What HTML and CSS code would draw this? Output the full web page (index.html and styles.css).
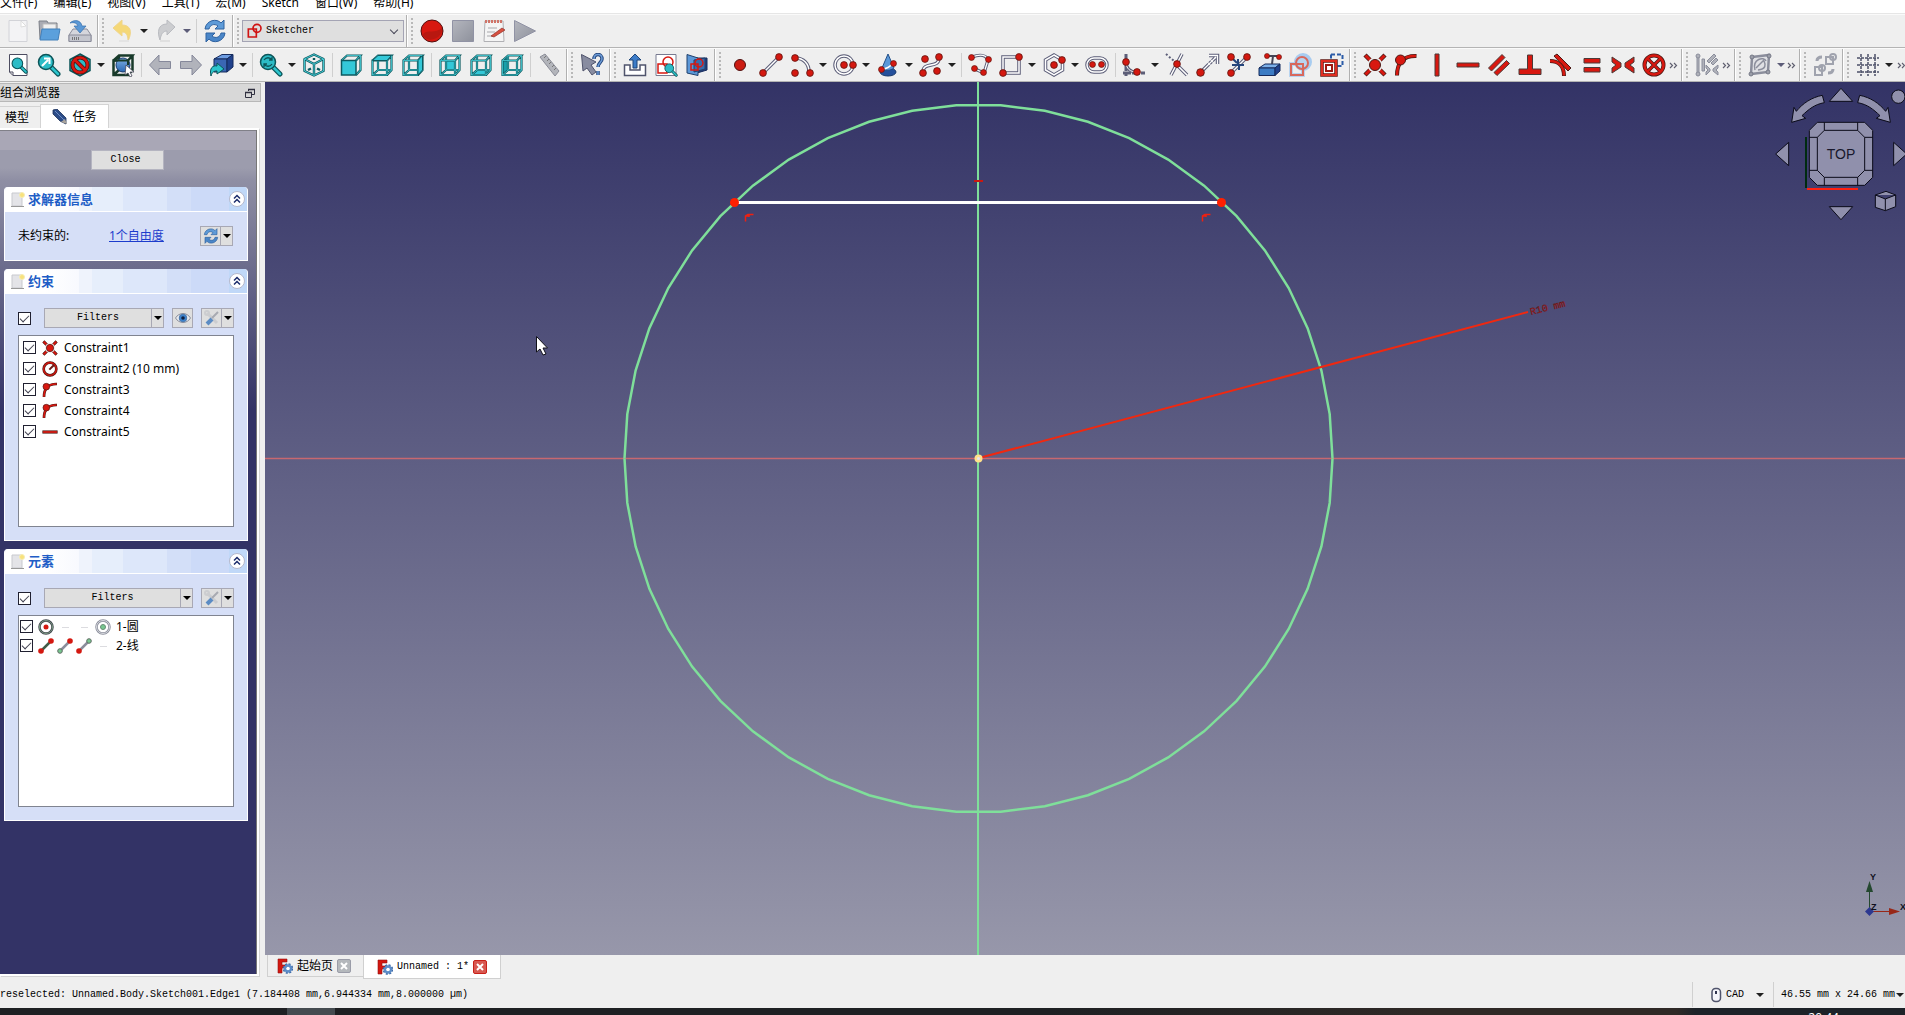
FILE: index.html
```html
<!DOCTYPE html>
<html lang="zh-CN">
<head>
<meta charset="utf-8">
<title>Sketcher</title>
<link rel="stylesheet" href="styles.css">
</head>
<body>
<svg class="sprite" aria-hidden="true">
  <defs>
    <linearGradient id="gBlue" x1="0" y1="0" x2="0" y2="1"><stop offset="0" stop-color="#7fb0e4"/><stop offset="1" stop-color="#2b68b4"/></linearGradient>
    <linearGradient id="gGray" x1="0" y1="0" x2="1" y2="1"><stop offset="0" stop-color="#b4b6be"/><stop offset="1" stop-color="#8e919c"/></linearGradient>
    <path id="wire" d="M2.500 7.500H17V22H2.500Z M2.500 7.500L8 2.500H21.500L17 7.500 M21.500 2.500V17L17 22 M8 2.500V17H21.500 M2.500 22L8 17"/>
  </defs>
  <symbol id="new" viewBox="0 0 24 24"><path d="M3 1.500H21V22.500H3Z" fill="#f3f3f5" stroke="#d2d3d8"/><path d="M15 2l5 5-5 1z" fill="#fff" stroke="#ddd"/></symbol>
  <symbol id="open" viewBox="0 0 24 24"><path d="M2 2h8l1 2h9v16H3z" fill="#a9abb3" stroke="#7d8088"/><path d="M6 5h13v8H6z" fill="#f0f0f0" stroke="#bbb"/><path d="M5 10H23L21 21H3z" fill="#5ba0dc" stroke="#4380ba"/></symbol>
  <symbol id="save" viewBox="0 0 24 24"><path d="M5 10H19L23 16V22.500H1V16z" fill="#d5d6dc" stroke="#8a8c9a"/><path d="M1 16H23V22.500H1z" fill="#c4c6ce" stroke="#8a8c9a"/><path d="M4 19.500h8" stroke="#777" stroke-dasharray="1 1" stroke-width="3"/><path d="M2 4C6 0 13 1 14 7h4l-6 7-6-7h4C9 4 6 3 2 4z" fill="#5a98d6" stroke="#3a70ac" stroke-width=".7"/></symbol>
  <symbol id="undo" viewBox="0 0 24 24"><path d="M2 9L11 1V6C19 6 22 12 17 22C17 16 15 13 11 13V17z" fill="#f5d877" stroke="#efd58c"/><path d="M8 22h10" stroke="#e4e4e4" stroke-width="2"/></symbol>
  <symbol id="redo" viewBox="0 0 24 24"><path d="M21 8L13 1V5C4 5 3 13 6 21C7 15 9 12 13 12V16z" fill="#cccdd0" stroke="#b9bbc0"/><path d="M6 22h10" stroke="#e0e0e0" stroke-width="2"/></symbol>
  <symbol id="refresh" viewBox="0 0 24 24"><path d="M2 10C3 1 14-1 18 4L21 1V10H12L15 7C11 4 7 6 6 10z" fill="#5e9bd8" stroke="#2f62a0"/><path d="M22 14C21 23 10 25 6 20L3 23V14H12L9 17C13 20 17 18 18 14z" fill="#4a86c8" stroke="#2f62a0"/></symbol>
  <symbol id="sketcher" viewBox="0 0 24 24"><g fill="none" stroke="#d01414" stroke-width="2.500"><path d="M2 9H14V21H2Z"/><circle cx="15" cy="8" r="6"/></g></symbol>
  <symbol id="record" viewBox="0 0 24 24"><circle cx="12" cy="12" r="11" fill="#d81810" stroke="#501010"/><path d="M3 15C8 10 15 15 22 9A11 11 0 0 1 3 17z" fill="#b81810"/></symbol>
  <symbol id="stop" viewBox="0 0 24 24"><path d="M1.500 1.500H22.500V22.500H1.500Z" fill="url(#gGray)" stroke="#9092a4"/></symbol>
  <symbol id="macro" viewBox="0 0 24 24"><path d="M3 2H21L22 22.500H2Z" fill="#f4f4f4" stroke="#b0b0b4"/><path d="M3 2.500H21" stroke="#d07468" stroke-width="3" stroke-dasharray="2 1"/><path d="M6 9h9M5 13h8M5 17h6" stroke="#a8a8ac"/><path d="M9 17l11-8 3 2-11 7z" fill="#d85040" stroke="#903028" stroke-width=".7"/></symbol>
  <symbol id="play" viewBox="0 0 24 24"><path d="M1.500 1.500L22.500 12L1.500 22.500Z" fill="url(#gGray)" stroke="#9092a4"/></symbol>
  <symbol id="lens" viewBox="0 0 24 24"><path d="M13 13L21 21" stroke="#0b5458" stroke-width="5" stroke-linecap="round"/><path d="M13 13L21 21" stroke="#2cc4cc" stroke-width="2.500" stroke-linecap="round"/><circle cx="9" cy="9" r="7.500" fill="#2cbcc6" stroke="#0b5458" stroke-width="1.500"/></symbol>
  <symbol id="fitall" viewBox="0 0 24 24"><path d="M3.500 1.500H21V22.500H7L3.500 19Z" fill="#fff" stroke="#4c4c60"/><path d="M3.500 19H7V22.500" fill="none" stroke="#4c4c60"/><use href="#lens" x="5" y="4" width="17" height="17"/></symbol>
  <symbol id="fitsel" viewBox="0 0 24 24"><use href="#lens" width="24" height="24"/><path d="M5 13L11 7M7 5.500H12.500V11" stroke="#fff" stroke-width="2" fill="none"/></symbol>
  <symbol id="drawstyle" viewBox="0 0 24 24"><path d="M12 1L22 6.500V17.500L12 23L2 17.500V6.500Z" fill="#2cbcc6" stroke="#0b5458" stroke-width="1.500"/><circle cx="12" cy="12" r="7.500" fill="none" stroke="#501010" stroke-width="4"/><path d="M7 7L17 17" stroke="#501010" stroke-width="4"/><circle cx="12" cy="12" r="7.500" fill="none" stroke="#d81810" stroke-width="2.500"/><path d="M7 7L17 17" stroke="#d81810" stroke-width="2.500"/></symbol>
  <symbol id="boxsel" viewBox="0 0 24 24"><use href="#wire" fill="none" stroke="#183a2a" stroke-width="2.500"/><circle cx="12" cy="12" r="7" fill="url(#gBlue)" stroke="#18386c"/><path d="M2.500 7.500H17V12" fill="none" stroke="#183a2a" stroke-width="2"/><path d="M15 12l8 7-4 0 2 4-2 1-2-4-3 2z" fill="#fff" stroke="#445" stroke-width=".8"/></symbol>
  <symbol id="back" viewBox="0 0 24 24"><path d="M1.500 12L11 2V8.500H22.500V15.500H11V22Z" fill="#b1b3bb" stroke="#85889a"/></symbol>
  <symbol id="fwd" viewBox="0 0 24 24"><path d="M22.500 12L13 2V8.500H1.500V15.500H13V22Z" fill="#b1b3bb" stroke="#85889a"/></symbol>
  <symbol id="linkgo" viewBox="0 0 24 24"><path d="M4 6L12 1.500H23L17 6Z" fill="#6c9be0" stroke="#152a5c"/><path d="M4 6H17V19H4Z" fill="#3a66b4" stroke="#152a5c"/><path d="M17 6L23 1.500V14L17 19Z" fill="#20418c" stroke="#152a5c"/><path d="M1 23C-1 15 3 12 7 13V10L14 16L7 21V18C4 18 2 19 1 23Z" fill="#2cc4cc" stroke="#0b5458"/></symbol>
  <symbol id="zoom" viewBox="0 0 24 24"><use href="#lens" width="24" height="24"/><path d="M5 7C7 4 11 4 13 7M13 4V7H10M13 11C11 14 7 14 5 11M5 14V11H8" fill="none" stroke="#0b5458" stroke-width="1.300"/></symbol>
  <symbol id="iso" viewBox="0 0 24 24"><g fill="none" stroke-linejoin="round"><path d="M12 1.500L21.500 6V18L12 22.500L2.500 18V6ZM2.500 6L12 11L21.500 6M12 11V22M6 17L9 15.500M18 17L15 15.500M12 5V7" stroke="#0c5a60" stroke-width="2.400"/><path d="M12 1.500L21.500 6V18L12 22.500L2.500 18V6ZM2.500 6L12 11L21.500 6M12 11V22" stroke="#48d0da" stroke-width=".9"/></g></symbol>
  <symbol id="vbase" viewBox="0 0 24 24"><use href="#wire" fill="none" stroke="#0c5a60" stroke-width="2.200"/><use href="#wire" fill="none" stroke="#48d0da" stroke-width=".8"/></symbol>
  <symbol id="vfront" viewBox="0 0 24 24"><path d="M2.500 7.500L8 2.500H21.500L17 7.500M21.500 2.500V17L17 22" fill="none" stroke="#0c5a60" stroke-width="2.200"/><path d="M2.500 7.500L8 2.500H21.500L17 7.500M21.500 2.500V17L17 22" fill="none" stroke="#48d0da" stroke-width=".8"/><path d="M2.500 7.500H17V22H2.500Z" fill="#34c8d8" stroke="#0c5a60" stroke-width="1.500"/></symbol>
  <symbol id="vtop" viewBox="0 0 24 24"><use href="#vbase"/><path d="M2.500 7.500L8 2.500H21.500L17 7.500Z" fill="#34c8d8" stroke="#0c5a60"/></symbol>
  <symbol id="vright" viewBox="0 0 24 24"><use href="#vbase"/><path d="M17 7.500L21.500 2.500V17L17 22Z" fill="#34c8d8" stroke="#0c5a60"/></symbol>
  <symbol id="vrear" viewBox="0 0 24 24"><path d="M8 7.500H17V17H8Z" fill="#34c8d8"/><use href="#vbase"/></symbol>
  <symbol id="vbottom" viewBox="0 0 24 24"><path d="M2.500 22L8 17H21.500L17 22Z" fill="#34c8d8"/><use href="#vbase"/></symbol>
  <symbol id="vleft" viewBox="0 0 24 24"><path d="M2.500 7.500L8 2.500V17L2.500 22Z" fill="#18a0aa"/><use href="#vbase"/></symbol>
  <symbol id="measure" viewBox="0 0 24 24"><path d="M3 4L8 1L22 18L18 23Z" fill="#b3b5bb" stroke="#8b8d98"/><path d="M9 3l-2 2M12 6l-2 2M14 9l-2 2M17 12l-2 2M19 15l-2 2" stroke="#777" /></symbol>
  <symbol id="whats" viewBox="0 0 24 24"><path d="M1.500 1.500L16 9L11 12L16 19L12 22L7 15L3 18Z" fill="#888ca0" stroke="#50546c"/><path d="M14 6C14 0 22 0 22 6C22 9 18 10 18 14M18 18V22" fill="none" stroke="#26467c" stroke-width="3.500"/><path d="M14 6C14 0 22 0 22 6C22 9 18 10 18 14M18 18V22" fill="none" stroke="#6b9bd6" stroke-width="1.500"/></symbol>
  <symbol id="leave" viewBox="0 0 24 24"><path d="M1.500 12H7V17H17V12H22.500V22.500H1.500Z" fill="#fff" stroke="#50546c" stroke-width="1.500"/><path d="M12 1L18 7H14V15H10V7H6Z" fill="#3c7cc8" stroke="#1d4478"/></symbol>
  <symbol id="viewsk" viewBox="0 0 24 24"><path d="M2 1.500H22V22.500H2Z" fill="#fff" stroke="#777a90"/><path d="M4 11H13V20H4Z" fill="none" stroke="#d81810" stroke-width="1.500"/><circle cx="14" cy="9" r="5" fill="none" stroke="#d81810" stroke-width="1.500"/><use href="#lens" x="10" y="10" width="14" height="14"/></symbol>
  <symbol id="section" viewBox="0 0 24 24"><path d="M10 5H22V17L12 20Z" fill="#24407c" stroke="#152a5c"/><path d="M2 1.500L13 5V22.500L2 20Z" fill="#5c98d8" stroke="#20406c"/><path d="M9 7L20 5V16L9 19Z" fill="#3a6cac" stroke="#20406c"/><path d="M6 11H13V17H6Z" fill="none" stroke="#d81810" stroke-width="1.500"/><circle cx="14" cy="10" r="4" fill="none" stroke="#d81810" stroke-width="1.500"/></symbol>

  <symbol id="dot" viewBox="0 0 8 8"><circle cx="4" cy="4" r="3.400" fill="#d41810" stroke="#601812" stroke-width=".8"/></symbol>
  <symbol id="point" viewBox="0 0 24 24"><circle cx="12" cy="12" r="5.500" fill="#cc1c12" stroke="#501010"/></symbol>
  <symbol id="line" viewBox="0 0 24 24"><path d="M4 20L20 4" stroke="#5c5e78" stroke-width="3.500"/><path d="M4 20L20 4" stroke="#fff" stroke-width="1.500"/><use href="#dot" x="0" y="16" width="8" height="8"/><use href="#dot" x="16" y="0" width="8" height="8"/></symbol>
  <symbol id="arc" viewBox="0 0 24 24"><g fill="none"><path d="M5 5C14 5 19 11 19 19" stroke="#5c5e78" stroke-width="3.500"/><path d="M5 5C14 5 19 11 19 19" stroke="#fff" stroke-width="1.500"/></g><use href="#dot" x="1" y="1" width="8" height="8"/><use href="#dot" x="1" y="16" width="8" height="8"/><use href="#dot" x="16" y="16" width="8" height="8"/></symbol>
  <symbol id="circle" viewBox="0 0 24 24"><circle cx="11" cy="12" r="9" fill="none" stroke="#5c5e78" stroke-width="3.500"/><circle cx="11" cy="12" r="9" fill="none" stroke="#fff" stroke-width="1.500"/><use href="#dot" x="7" y="8" width="8" height="8"/><use href="#dot" x="16" y="8" width="8" height="8"/></symbol>
  <symbol id="conic" viewBox="0 0 24 24"><ellipse cx="12" cy="19" rx="8" ry="4" fill="#24509c" stroke="#18386c"/><path d="M12 1L18 15C14 18 10 18 6 15Z" fill="#5a98d8" stroke="#245088"/><path d="M6 16C10 16 14 14 17 10" stroke="#fff" stroke-width="1.500" fill="none"/><use href="#dot" x="2" y="13" width="7" height="7"/><use href="#dot" x="14" y="7" width="7" height="7"/></symbol>
  <symbol id="spline" viewBox="0 0 24 24"><g fill="none"><path d="M4 19C4 8 20 16 20 5" stroke="#5c5e78" stroke-width="3.500"/><path d="M4 19C4 8 20 16 20 5" stroke="#fff" stroke-width="1.500"/></g><use href="#dot" x="2" y="2" width="8" height="8"/><use href="#dot" x="16" y="0" width="8" height="8"/><use href="#dot" x="0" y="16" width="8" height="8"/><use href="#dot" x="14" y="14" width="8" height="8"/></symbol>
  <symbol id="poly" viewBox="0 0 24 24"><g fill="none"><path d="M4 4C12 1 18 2 20 7L16 20L7 16" stroke="#5c5e78" stroke-width="3.200"/><path d="M4 4C12 1 18 2 20 7L16 20L7 16" stroke="#fff" stroke-width="1.300"/></g><use href="#dot" x="0" y="1" width="7" height="7"/><use href="#dot" x="17" y="3" width="7" height="7"/><use href="#dot" x="12" y="16" width="7" height="7"/><use href="#dot" x="3" y="12" width="7" height="7"/></symbol>
  <symbol id="rect" viewBox="0 0 24 24"><path d="M4 4H20V20H4Z" fill="none" stroke="#5c5e78" stroke-width="3.500"/><path d="M4 4H20V20H4Z" fill="none" stroke="#fff" stroke-width="1.500"/><use href="#dot" x="16" y="0" width="8" height="8"/><use href="#dot" x="0" y="16" width="8" height="8"/></symbol>
  <symbol id="hex" viewBox="0 0 24 24"><path d="M12 2L20.500 7V17L12 22L3.500 17V7Z" fill="none" stroke="#5c5e78" stroke-width="3.500"/><path d="M12 2L20.500 7V17L12 22L3.500 17V7Z" fill="none" stroke="#fff" stroke-width="1.500"/><use href="#dot" x="8" y="8" width="8" height="8"/><use href="#dot" x="16" y="3" width="8" height="8"/></symbol>
  <symbol id="slot" viewBox="0 0 24 24"><rect x="2" y="5" width="20" height="14" rx="7" fill="none" stroke="#5c5e78" stroke-width="3.500"/><rect x="2" y="5" width="20" height="14" rx="7" fill="none" stroke="#fff" stroke-width="1.500"/><use href="#dot" x="4" y="8" width="7" height="7"/><use href="#dot" x="13" y="8" width="7" height="7"/></symbol>
  <symbol id="fillet" viewBox="0 0 24 24"><path d="M4 1V23M1 20H23" stroke="#5c5e78" stroke-width="3" stroke-dasharray="8 1"/><path d="M4 8C4 16 8 19 15 19" fill="none" stroke="#5c5e78" stroke-width="3"/><path d="M4 8C4 16 8 19 15 19" fill="none" stroke="#fff"/><use href="#dot" x="0" y="5" width="8" height="8"/><use href="#dot" x="11" y="15" width="8" height="8"/></symbol>
  <symbol id="trim" viewBox="0 0 24 24"><path d="M17 1L6 22M10 10L22 22" stroke="#5c5e78" stroke-width="3.500"/><path d="M17 1L6 22M10 10L22 22" stroke="#fff" stroke-width="1.500"/><path d="M1 1L9 8" stroke="#5c5e78" stroke-width="2" stroke-dasharray="2 2"/><use href="#dot" x="8" y="7" width="8" height="8"/></symbol>
  <symbol id="extend" viewBox="0 0 24 24"><path d="M5 19L19 5" stroke="#5c5e78" stroke-width="3.500" stroke-dasharray="11 1 3 1"/><path d="M13 2.500H21.500V11" fill="none" stroke="#5c5e78" stroke-width="3.500"/><path d="M5 19L20 4M13 2.500H21.500V11" fill="none" stroke="#fff" stroke-width="1.300"/><use href="#dot" x="0" y="15" width="9" height="9"/></symbol>
  <symbol id="split" viewBox="0 0 24 24"><path d="M4 20L20 4" stroke="#5c5e78" stroke-width="3.500"/><path d="M4 20L20 4" stroke="#fff" stroke-width="1.500"/><path d="M5 5L10 10M11 6V12H5M17 12H12V17" stroke="#26467c" stroke-width="2" fill="none"/><use href="#dot" x="0" y="0" width="8" height="8"/><use href="#dot" x="16" y="0" width="8" height="8"/><use href="#dot" x="0" y="16" width="8" height="8"/></symbol>
  <symbol id="external" viewBox="0 0 24 24"><path d="M1 15L7 11H22L17 15Z" fill="#7cb0e8" stroke="#152a5c"/><path d="M1 15H17V22.500H1Z" fill="#3c7cc4" stroke="#152a5c"/><path d="M17 15L22 11V18L17 22.500Z" fill="#20418c" stroke="#152a5c"/><path d="M8 3H20M15 3L14 11" stroke="#445" stroke-width="2"/><use href="#dot" x="6" y="0" width="6" height="6"/><use href="#dot" x="18" y="1" width="6" height="6"/></symbol>
  <symbol id="carbon" viewBox="0 0 24 24"><g fill="none"><path d="M2 11H14V22H2Z" stroke="#b8d4f0" stroke-width="4"/><circle cx="14" cy="9" r="7" fill="#b8d4f0" stroke="#a8ccf0" stroke-width="4"/><path d="M2 11H14V22H2Z" stroke="#d8685c" stroke-width="2"/><circle cx="13" cy="10" r="6" stroke="#d8685c" stroke-width="2"/></g></symbol>
  <symbol id="constr" viewBox="0 0 24 24"><path d="M11 1.500H22.500V13H17M11 1.500V7" fill="none" stroke="#2c5ca8" stroke-width="2" stroke-dasharray="4 2"/><path d="M2 8H16V22H2Z" fill="#fff" stroke="#601812" stroke-width="3.500"/><path d="M2 8H16V22H2Z" fill="none" stroke="#e02c20" stroke-width="2"/><path d="M6 12H12V18H6Z" fill="none" stroke="#a01810" stroke-width="2"/></symbol>

  <symbol id="coinc" viewBox="0 0 24 24"><path d="M2 2L22 22M22 2L2 22" stroke="#4a1a16" stroke-width="4.500"/><path d="M2.500 2.500L21.500 21.500M21.500 2.500L2.500 21.500" stroke="#d81810" stroke-width="3"/><circle cx="12" cy="12" r="7.500" fill="#eee"/><circle cx="12" cy="12" r="5.500" fill="#d81810" stroke="#4a1a16"/></symbol>
  <symbol id="ponobj" viewBox="0 0 24 24"><path d="M3 22.500C3 10 9 2.500 22.500 3" fill="none" stroke="#4a1a16" stroke-width="4"/><path d="M3 22C3 10 9 2.500 22 3" fill="none" stroke="#d81810" stroke-width="2.500"/><circle cx="6.500" cy="7" r="5" fill="#d81810" stroke="#4a1a16"/></symbol>
  <symbol id="vert" viewBox="0 0 24 24"><path d="M10 1H14V23H10Z" fill="#d81810" stroke="#4a3a38"/></symbol>
  <symbol id="horiz" viewBox="0 0 24 24"><path d="M1 10H23V14H1Z" fill="#d81810" stroke="#4a3a38"/></symbol>
  <symbol id="para" viewBox="0 0 24 24"><path d="M1.500 15L15 1.500L18 4.500L4.500 18ZM7 19.500L19.500 7.500L22.500 10.500L10 22.500Z" fill="#d81810" stroke="#4a3a38"/></symbol>
  <symbol id="perp" viewBox="0 0 24 24"><path d="M9.500 2H14.500V16H23V21.500H1V16H9.500Z" fill="#d81810" stroke="#4a3a38"/></symbol>
  <symbol id="tang" viewBox="0 0 24 24"><path d="M5 3L8 1L22 15L19 18Z" fill="#d81810" stroke="#4a1a16"/><path d="M1 8C9 8 15 13 15 23" fill="none" stroke="#4a1a16" stroke-width="4"/><path d="M1 8C9 8 15 13 15 22.500" fill="none" stroke="#d81810" stroke-width="2.500"/></symbol>
  <symbol id="equal" viewBox="0 0 24 24"><path d="M4 5.500H20V10H4ZM4 14.500H20V19H4Z" fill="#d81810" stroke="#4a3a38"/></symbol>
  <symbol id="sym" viewBox="0 0 24 24"><path d="M1 4L10 10V14L1 20V15L5 12L1 9ZM23 4L14 10V14L23 20V15L19 12L23 9Z" fill="#d81810" stroke="#4a3a38"/></symbol>
  <symbol id="block" viewBox="0 0 24 24"><g fill="none"><circle cx="12" cy="12" r="9.500" stroke="#4a1a16" stroke-width="4"/><path d="M6 6L18 18M18 6L6 18" stroke="#4a1a16" stroke-width="3.500"/><circle cx="12" cy="12" r="9.500" stroke="#d81810" stroke-width="2.500"/><path d="M5 5L19 19M19 5L5 19" stroke="#d81810" stroke-width="2"/></g></symbol>
  <symbol id="radius" viewBox="0 0 24 24"><circle cx="12" cy="12" r="9.500" fill="none" stroke="#4a1a16" stroke-width="4"/><circle cx="12" cy="12" r="9.500" fill="none" stroke="#c81810" stroke-width="2.500"/><path d="M11 13L18 6" stroke="#6a1a16" stroke-width="3"/></symbol>
  <symbol id="selcon" viewBox="0 0 24 24"><g fill="#b0b2ba" stroke="#8b8e9c"><path d="M2 3H4V22H2Z"/><circle cx="3" cy="3" r="2"/><circle cx="3" cy="21" r="2"/><path d="M7 6H9.500V18H7ZM12 8L19 1L21 3L14 10ZM16 10L21 5L23 7L18 12ZM11 12L15 16V18L11 22V19L13 17L11 15ZM23 12L18 16V18L23 22V19L21 17L23 15Z"/></g></symbol>
  <symbol id="bspl" viewBox="0 0 24 24"><path d="M4 4L21 2L20 19L3 21Z" fill="#dfe0e4" stroke="#8b8e9c" stroke-width="2.500"/><path d="M7 17C4 6 16 3 18 8M10 17C18 16 18 12 16 8M8 15L16 7" fill="none" stroke="#8b8e9c" stroke-width="1.500"/><g fill="#9a9da8" stroke="#777a88"><circle cx="4" cy="4" r="2"/><circle cx="21" cy="3" r="2"/><circle cx="20" cy="19" r="2"/><circle cx="3" cy="21" r="2"/></g></symbol>
  <symbol id="vspace" viewBox="0 0 24 24"><g fill="none" stroke="#a0a3ae" stroke-width="2"><path d="M13 4H20V11H13Z"/><circle cx="20" cy="4" r="3"/><path d="M2 14H9V22H2Z"/><circle cx="9" cy="15" r="3"/><path d="M4 8C4 5 6 4 9 4M20 16C20 19 18 20 15 20" stroke-width="3"/></g></symbol>
  <symbol id="grid" viewBox="0 0 24 24"><path d="M5 1V23M12 1V23M19 1V23M1 5H23M1 12H23M1 19H23" stroke="#4c5068" stroke-width="1.500" stroke-dasharray="3 1"/></symbol>

  <symbol id="doc" viewBox="0 0 14 15"><path d="M1 1H11V14H1Z" fill="#e4e4e8" stroke="#c8c9ce"/><path d="M0 14.500H13" stroke="#999"/><circle cx="11" cy="3" r="2.500" fill="#f8e27c" stroke="#f6ecb4"/></symbol>
  <symbol id="pencil" viewBox="0 0 16 16"><path d="M1 1L5 0L14 9V15L8 12L1 5Z" fill="#2c4c88" stroke="#1c3058" stroke-width=".8"/><path d="M3 2L12 11" stroke="#6c8cc4"/><path d="M9 13L13 10L15 15Z" fill="#aaa49c"/></symbol>
  <symbol id="tools" viewBox="0 0 16 16"><path d="M3 3L13 13" stroke="#cccdd0" stroke-width="3"/><circle cx="3" cy="3" r="2" fill="none" stroke="#cccdd0" stroke-width="2"/><path d="M14 2L8 8" stroke="#a8aab2" stroke-width="2"/><path d="M8 9L3 14" stroke="#5c8cc4" stroke-width="4"/></symbol>
  <symbol id="eye" viewBox="0 0 16 16"><path d="M.5 8C4 2 12 2 15.500 8C12 14 4 14 .5 8Z" fill="#e8eaee" stroke="#8b8e9c"/><circle cx="8" cy="8" r="3.800" fill="#3c84d0" stroke="#4a78ac"/><circle cx="8" cy="8" r="1.800" fill="#102040"/></symbol>
  <symbol id="restore" viewBox="0 0 10 10"><path d="M3.500 3V1.500H9.500V6.500H7M.5 4.500V9.500H6.500V4.500Z" fill="none" stroke="#303040"/><path d="M3 1.500H10M0 4.500H7" stroke="#303040" stroke-width="1.500"/></symbol>
  <symbol id="chev" viewBox="0 0 18 18"><circle cx="9" cy="9" r="7.500" fill="#fff" stroke="#b4b8cc"/><path d="M6 8.500L9 5.500L12 8.500M6 12.500L9 9.500L12 12.500" fill="none" stroke="#1c2c6c" stroke-width="1.500"/></symbol>
  <symbol id="fcad" viewBox="0 0 16 16"><path d="M1 1H10V4H5V7H9V10H5V15H1Z" fill="#d41810" stroke="#901010" stroke-width=".6"/><circle cx="11" cy="10.500" r="4.300" fill="none" stroke="#3c68a4" stroke-width="2" stroke-dasharray="2 1.380"/><circle cx="11" cy="10.500" r="3" fill="none" stroke="#5c8cc8" stroke-width="2.500"/><circle cx="11" cy="10.500" r="1.500" fill="#fff"/></symbol>
  <symbol id="x" viewBox="0 0 14 14"><path d="M3 3L9 9M9 3L3 9" stroke="#fff" stroke-width="2"/></symbol>
  <symbol id="mouse" viewBox="0 0 12 16"><rect x="2" y="1.500" width="8.500" height="13" rx="3.500" fill="#f4f4fa" stroke="#50546c" stroke-width="1.500"/><path d="M6 4V7" stroke="#303450" stroke-width="2"/></symbol>
  <symbol id="more" viewBox="0 0 10 8"><path d="M1 2L3.500 4.500L1 7M5 2L7.500 4.500L5 7" fill="none" stroke="#606070" stroke-width="1.200"/></symbol>
  <symbol id="ecirc" viewBox="0 0 16 16"><circle cx="8" cy="8" r="6.500" fill="#fff" stroke="#444850" stroke-width="2.500"/><circle cx="8" cy="8" r="6.500" fill="none" stroke="#7c9c84"/><circle cx="8" cy="8" r="2.500" fill="#d41810"/></symbol>
  <symbol id="ecen" viewBox="0 0 16 16"><circle cx="8" cy="8" r="6.500" fill="#fff" stroke="#8b8e9c" stroke-width="2.500"/><circle cx="8" cy="8" r="6.500" fill="none" stroke="#d8dade"/><circle cx="8" cy="8" r="2.500" fill="#78c890" stroke="#688c74"/></symbol>
  <symbol id="edash" viewBox="0 0 16 16"><path d="M5 8.500H12" stroke="#dcdce0"/></symbol>
  <symbol id="el1" viewBox="0 0 16 16"><path d="M3 13L13 3" stroke="#405c48" stroke-width="2.500"/><circle cx="3" cy="13" r="2.800" fill="#d41810"/><circle cx="13" cy="3" r="2.800" fill="#d41810"/></symbol>
  <symbol id="el2" viewBox="0 0 16 16"><path d="M3 13L13 3" stroke="#8b8e9c" stroke-width="2.500"/><circle cx="3" cy="13" r="2.300" fill="#78c890" stroke="#606c64"/><circle cx="13" cy="3" r="2.800" fill="#d41810"/></symbol>
  <symbol id="el3" viewBox="0 0 16 16"><path d="M3 13L13 3" stroke="#8b8e9c" stroke-width="2.500"/><circle cx="3" cy="13" r="2.800" fill="#d41810"/><circle cx="13" cy="3" r="2.300" fill="#78c890" stroke="#606c64"/></symbol>
</svg>

<nav class="menubar">
  <a href="#">文件(F)</a><a href="#">编辑(E)</a><a href="#">视图(V)</a><a href="#">工具(T)</a><a href="#">宏(M)</a><a href="#">Sketch</a><a href="#">窗口(W)</a><a href="#">帮助(H)</a>
</nav>

<div class="toolbar">
  <div class="group first">
    <button class="tool"><svg><use href="#new"/></svg></button><button class="tool"><svg><use href="#open"/></svg></button><button class="tool"><svg><use href="#save"/></svg></button>
  </div>
  <div class="group">
    <button class="tool"><svg><use href="#undo"/></svg></button><button class="drop"></button><button class="tool"><svg><use href="#redo"/></svg></button><button class="drop dim"></button><i class="sep"></i><button class="tool"><svg><use href="#refresh"/></svg></button>
  </div>
  <div class="group">
    <div class="workbench"><svg><use href="#sketcher"/></svg><select aria-label="Workbench"><option>Sketcher</option></select></div>
  </div>
  <div class="group last">
    <button class="tool"><svg><use href="#record"/></svg></button><button class="tool"><svg><use href="#stop"/></svg></button><button class="tool"><svg><use href="#macro"/></svg></button><button class="tool"><svg><use href="#play"/></svg></button>
  </div>
</div>

<div class="toolbar">
  <div class="group first">
    <button class="tool"><svg><use href="#fitall"/></svg></button><button class="tool"><svg><use href="#fitsel"/></svg></button><button class="tool"><svg><use href="#drawstyle"/></svg></button><button class="drop"></button><button class="tool"><svg><use href="#boxsel"/></svg></button><i class="sep"></i><button class="tool"><svg><use href="#back"/></svg></button><button class="tool"><svg><use href="#fwd"/></svg></button><button class="tool"><svg><use href="#linkgo"/></svg></button><button class="drop"></button><i class="sep"></i><button class="tool"><svg><use href="#zoom"/></svg></button><button class="drop"></button><button class="tool"><svg><use href="#iso"/></svg></button><i class="sep"></i><button class="tool"><svg><use href="#vfront"/></svg></button><button class="tool"><svg><use href="#vtop"/></svg></button><button class="tool"><svg><use href="#vright"/></svg></button><i class="sep"></i><button class="tool"><svg><use href="#vrear"/></svg></button><button class="tool"><svg><use href="#vbottom"/></svg></button><button class="tool"><svg><use href="#vleft"/></svg></button><i class="sep"></i><button class="tool"><svg><use href="#measure"/></svg></button>
  </div>
  <div class="group"><button class="tool"><svg><use href="#whats"/></svg></button></div>
  <div class="group">
    <button class="tool"><svg><use href="#leave"/></svg></button><button class="tool"><svg><use href="#viewsk"/></svg></button><button class="tool"><svg><use href="#section"/></svg></button>
  </div>
  <div class="group">
    <button class="tool"><svg><use href="#point"/></svg></button><button class="tool"><svg><use href="#line"/></svg></button><button class="tool"><svg><use href="#arc"/></svg></button><button class="drop"></button><button class="tool"><svg><use href="#circle"/></svg></button><button class="drop"></button><button class="tool"><svg><use href="#conic"/></svg></button><button class="drop"></button><button class="tool"><svg><use href="#spline"/></svg></button><button class="drop"></button><i class="sep"></i><button class="tool"><svg><use href="#poly"/></svg></button><button class="tool"><svg><use href="#rect"/></svg></button><button class="drop"></button><button class="tool"><svg><use href="#hex"/></svg></button><button class="drop"></button><button class="tool"><svg><use href="#slot"/></svg></button><i class="sep"></i><button class="tool"><svg><use href="#fillet"/></svg></button><button class="drop"></button><button class="tool"><svg><use href="#trim"/></svg></button><button class="tool"><svg><use href="#extend"/></svg></button><button class="tool"><svg><use href="#split"/></svg></button><button class="tool"><svg><use href="#external"/></svg></button><button class="tool"><svg><use href="#carbon"/></svg></button><button class="tool"><svg><use href="#constr"/></svg></button>
  </div>
  <div class="group">
    <button class="tool"><svg><use href="#coinc"/></svg></button><button class="tool"><svg><use href="#ponobj"/></svg></button><button class="tool"><svg><use href="#vert"/></svg></button><button class="tool"><svg><use href="#horiz"/></svg></button><button class="tool"><svg><use href="#para"/></svg></button><button class="tool"><svg><use href="#perp"/></svg></button><button class="tool"><svg><use href="#tang"/></svg></button><button class="tool"><svg><use href="#equal"/></svg></button><button class="tool"><svg><use href="#sym"/></svg></button><button class="tool"><svg><use href="#block"/></svg></button><button class="more"><svg><use href="#more"/></svg></button>
  </div>
  <div class="group"><button class="tool"><svg><use href="#selcon"/></svg></button><button class="more"><svg><use href="#more"/></svg></button></div>
  <div class="group"><button class="tool"><svg><use href="#bspl"/></svg></button><button class="drop dim"></button><button class="more"><svg><use href="#more"/></svg></button></div>
  <div class="group"><button class="tool"><svg><use href="#vspace"/></svg></button></div>
  <div class="group last"><button class="tool"><svg><use href="#grid"/></svg></button><button class="drop"></button><button class="more end"><svg><use href="#more"/></svg></button></div>
</div>

<main class="work">
  <aside class="dock">
    <div class="dock-title"><span>组合浏览器</span><button class="bare"><svg class="i10"><use href="#restore"/></svg></button></div>
    <div class="dock-tabs"><button class="dtab">模型</button><button class="dtab on"><svg class="i16"><use href="#pencil"/></svg>任务</button></div>
    <div class="tasks">
      <button class="close">Close</button>
      <section class="box">
        <header><svg class="doc"><use href="#doc"/></svg><h2>求解器信息</h2><button class="bare"><svg class="i18"><use href="#chev"/></svg></button></header>
        <div class="content solver">
          <span>未约束的:</span><a href="#">1个自由度</a>
          <div class="split"><button><svg class="i16"><use href="#refresh"/></svg></button><button class="arrow"></button></div>
        </div>
      </section>
      <section class="box">
        <header><svg class="doc"><use href="#doc"/></svg><h2>约束</h2><button class="bare"><svg class="i18"><use href="#chev"/></svg></button></header>
        <div class="content">
          <div class="filters"><input type="checkbox" checked aria-label="Filters"><div class="split wide"><button>Filters</button><button class="arrow"></button></div><div class="split"><button class="solo"><svg class="i16"><use href="#eye"/></svg></button></div><div class="split"><button><svg class="i16"><use href="#tools"/></svg></button><button class="arrow"></button></div></div>
          <div class="list constraints">
            <label><input type="checkbox" checked><svg class="i16"><use href="#coinc"/></svg>Constraint1</label>
            <label><input type="checkbox" checked><svg class="i16"><use href="#radius"/></svg>Constraint2 (10 mm)</label>
            <label><input type="checkbox" checked><svg class="i16"><use href="#ponobj"/></svg>Constraint3</label>
            <label><input type="checkbox" checked><svg class="i16"><use href="#ponobj"/></svg>Constraint4</label>
            <label><input type="checkbox" checked><svg class="i16"><use href="#horiz"/></svg>Constraint5</label>
          </div>
        </div>
      </section>
      <section class="box">
        <header><svg class="doc"><use href="#doc"/></svg><h2>元素</h2><button class="bare"><svg class="i18"><use href="#chev"/></svg></button></header>
        <div class="content">
          <div class="filters"><input type="checkbox" checked aria-label="Filters"><div class="split wide"><button>Filters</button><button class="arrow"></button></div><div class="split"><button><svg class="i16"><use href="#tools"/></svg></button><button class="arrow"></button></div></div>
          <div class="list elements">
            <label><input type="checkbox" checked><svg class="i16"><use href="#ecirc"/></svg><svg class="i16"><use href="#edash"/></svg><svg class="i16"><use href="#edash"/></svg><svg class="i16"><use href="#ecen"/></svg><span>1-圆</span></label>
            <label><input type="checkbox" checked><svg class="i16"><use href="#el1"/></svg><svg class="i16"><use href="#el2"/></svg><svg class="i16"><use href="#el3"/></svg><svg class="i16"><use href="#edash"/></svg><span>2-线</span></label>
          </div>
        </div>
      </section>
    </div>
  </aside>

  <div class="mdi">
    <div class="view">
      <svg class="scene" viewBox="265 82 1640 873" preserveAspectRatio="xMidYMid slice">
        <path d="M265 458.500H1905" stroke="#c86870" stroke-width="1.500"/>
        <path d="M978 82V955" stroke="#7fdf9a" stroke-width="2"/>
        <g transform="translate(978.500 458.500)" fill="none" stroke="#7fdf9a" stroke-width="2.500">
          <path id="quad" d="M354 0L351.200 44.400L342.900 88L329.100 130.300L310.200 170.500L286.400 208.100L258.100 242.300L225.600 272.800L189.700 298.900L150.700 320.300L109.400 336.700L66.300 347.700L22.200 353.300H0"/>
          <use href="#quad" transform="scale(-1 1)"/><use href="#quad" transform="scale(1 -1)"/><use href="#quad" transform="scale(-1 -1)"/>
        </g>
        <path d="M734 202.500H1221" stroke="#fff" stroke-width="3"/>
        <g fill="#ff2000"><circle cx="734.500" cy="202.500" r="4.500"/><circle cx="1221.500" cy="202.500" r="4.500"/></g>
        <path d="M979 458L1528 312" stroke="#f02810" stroke-width="2"/>
        <circle cx="978.500" cy="458.500" r="4" fill="#ffe08c"/><circle cx="978.500" cy="458.500" r="1.500" fill="#e8e4f0"/>
        <path d="M974 181H983" stroke="#c81810" stroke-width="2"/>
        <path id="mk" d="M745.500 221.500V216L748 214.500H753.500M746 216H749V217" fill="none" stroke="#f02010" stroke-width="1.500"/>
        <use href="#mk" x="457"/>
        <text class="dim-label" transform="translate(1531 315) rotate(-14)">R10 mm</text>

        <g transform="translate(1440 0) scale(.33333)" fill="#9090ac" stroke="#0a0a18" stroke-width="3" stroke-linejoin="round">
          <path d="M1203 265L1238 304H1168ZM1007 462L1046 427V497ZM1400 462L1361 427V497ZM1203 659L1168 620H1238Z"/>
          <path d="M1147 286C1115 292 1088 310 1069 334L1062 322L1055 367L1097 355L1086 347C1106 328 1124 313 1153 308Z"/>
          <path d="M1259 286C1291 292 1318 310 1337 334L1344 322L1351 367L1309 355L1320 347C1300 328 1282 313 1253 308Z"/>
          <circle cx="1375" cy="290" r="20"/>
          <path d="M1132 367H1274L1298 391V532L1274 556H1132L1108 532V391Z"/>
          <path d="M1153 391H1253L1274 412V511L1253 532H1153L1132 511V412ZM1153 367V391M1253 367V391M1153 532V556M1253 532V556M1108 412H1132M1108 511H1132M1274 412H1298M1274 511H1298"/>
          <path d="M1306 585L1338 574L1367 585V620L1336 632L1306 622ZM1306 585L1336 597L1367 585M1336 597V632"/>
        </g>
        <path d="M1806 137V188" stroke="#002c10" stroke-width="2"/><path d="M1807 189H1858" stroke="#ff2010" stroke-width="2"/>
        <text class="face" x="1841" y="159" text-anchor="middle">TOP</text>

        <path d="M1869.500 911V890" stroke="#24482f"/><path d="M1869.500 881L1873 892H1866Z" fill="#24482f"/>
        <path d="M1870 911.500H1890" stroke="#982818"/><path d="M1889 908L1900 911.500L1889 915Z" fill="#982818"/>
        <path d="M1869.500 907L1874 911.500L1869.500 916L1865 911.500Z" fill="#2c3890"/>
        <g class="axis"><text x="1870" y="880">Y</text><text x="1871" y="910">Z</text><text x="1900" y="910">X</text></g>
        <path d="M536.500 336.500V352L540 349L543 355L546 354L543 348H547.500Z" fill="#fff" stroke="#101018"/>
      </svg>
    </div>
    <div class="doc-tabs">
      <div class="doc-tab"><svg class="i16"><use href="#fcad"/></svg><span>起始页</span><button class="tabx"><svg><use href="#x"/></svg></button></div>
      <div class="doc-tab on"><svg class="i16"><use href="#fcad"/></svg><span class="mono">Unnamed : 1*</span><button class="tabx red"><svg><use href="#x"/></svg></button></div>
    </div>
  </div>
</main>

<footer class="status">
  <span class="message">reselected: Unnamed.Body.Sketch001.Edge1 (7.184408 mm,6.944334 mm,8.000000 µm)</span>
  <button class="nav"><svg><use href="#mouse"/></svg>CAD<i class="tri"></i></button>
  <button class="dims">46.55 mm x 24.66 mm<i class="tri"></i></button>
</footer>
<div class="taskbar"><span class="active"></span><span class="clock">20:44</span></div>
</body>
</html>
```
FILE: styles.css
```css
* { box-sizing: border-box; }
body {
  margin: 0;
  height: 100vh;
  display: flex;
  flex-direction: column;
  overflow: hidden;
  background: #efefef;
  color: #000;
  font: 12px/16px "Noto Sans", "Noto Sans CJK SC", sans-serif;
}
button, select, input { font: inherit; color: inherit; margin: 0; }
button { border: 0; padding: 0; background: none; display: flex; align-items: center; justify-content: center; }
svg { display: block; flex: none; }
.sprite { position: absolute; width: 0; height: 0; }
.i10 { width: 10px; height: 10px; }
.i16 { width: 16px; height: 16px; }
.i18 { width: 18px; height: 18px; }

.menubar {
  flex: none;
  height: 14px;
  display: flex;
  align-items: flex-end;
  gap: 16px;
  overflow: hidden;
  background: #fff;
  border-bottom: 1px solid #e6e6e6;
}
.menubar a { color: #000; text-decoration: none; line-height: 20px; white-space: nowrap; }

.toolbar {
  flex: none;
  height: 34px;
  display: flex;
  overflow: hidden;
  border-top: 1px solid #fafafa;
  border-bottom: 1px solid #b4b4b4;
}
.group {
  flex: none;
  display: flex;
  align-items: center;
  padding-right: 2px;
  border-right: 1px solid #b0b0b0;
  box-shadow: 1px 0 #fff;
  margin-right: 1px;
}
.group::before {
  content: "";
  width: 2px;
  height: 26px;
  margin: 0 3px;
  background: repeating-linear-gradient(#b8b8b8 0 2px, transparent 2px 4px);
}
.group.first { padding-left: 2px; }
.group.first::before { display: none; }
.group.last { border-right: 0; box-shadow: none; }
.tool { width: 31px; height: 32px; }
.tool svg { width: 24px; height: 24px; }
.drop { width: 12px; height: 32px; }
.drop::before, .tri, .arrow::before {
  content: "";
  border: 4px solid transparent;
  border-top-color: #202020;
  border-bottom: 0;
}
.drop.dim::before { border-top-color: #5c5c78; }
.sep { width: 1px; height: 24px; margin: 0 2px 0 3px; background: #cfcfcf; }
.more { width: 10px; height: 32px; }
.more.end { margin-left: 2px; }
.more svg { width: 10px; height: 8px; }
.workbench {
  width: 162px;
  height: 22px;
  display: flex;
  align-items: center;
  gap: 3px;
  padding: 0 4px;
  border: 1px solid #a4a4b4;
  background: #dfdfdf;
}
.workbench svg { width: 16px; height: 16px; }
.workbench select {
  flex: 1;
  appearance: none;
  border: 0;
  padding: 0;
  background: none;
  font: 10px/16px "Liberation Mono", monospace;
}
.workbench::after {
  content: "";
  width: 5px;
  height: 5px;
  margin: 0 2px 3px 0;
  border: solid #484858;
  border-width: 0 1px 1px 0;
  transform: rotate(45deg);
}

.work { flex: 1; min-height: 0; display: flex; }
.dock { flex: none; width: 265px; display: flex; flex-direction: column; padding: 1px 4px 3px 0; }
.dock-title {
  height: 19px;
  display: flex;
  align-items: center;
  justify-content: space-between;
  padding-right: 5px;
  background: #d8d8d8;
  border: 1px solid #b8b8b8;
  border-left: 0;
}
.dock-tabs { display: flex; align-items: flex-end; padding-top: 2px; }
.dtab { height: 22px; width: 40px; padding-right: 6px; border: 1px solid #d4d4d4; border-width: 1px 0 0; }
.dtab.on { width: 69px; height: 24px; gap: 4px; background: #fff; border-width: 1px 1px 0; padding: 0; }
.tasks {
  flex: 1;
  width: 259px;
  padding: 20px 9px 0 4px;
  border: solid #fff;
  border-width: 2px 2px 2px 0;
  box-shadow: inset -1px 0 #777, inset 0 1px #808088, 1px 1px #d4d4d4;
  background: linear-gradient(#a9a7b6 0 20px, #9c9cad 20px 38px, #8f8fa4 50px, #333366 280px);
}
.close {
  width: 73px;
  height: 20px;
  margin: 0 auto 17px 87px;
  padding-right: 4px;
  background: #dfdfdf;
  border: 1px solid #b4b4c0;
}
.close, .split, .mono, .status button, .message { font-family: "Liberation Mono", "Noto Sans CJK SC", monospace; font-size: 10px; }
.box { width: 244px; margin-bottom: 8px; border: 1px solid #fff; border-top: 0; border-radius: 4px 4px 0 0; overflow: hidden; background: #d6dff7; }
.box header {
  height: 25px;
  display: flex;
  align-items: center;
  gap: 3px;
  padding: 0 1px 0 6px;
  border-bottom: 1px solid #fff;
  background: linear-gradient(90deg, #fff 0 40px, #f8f9fe 74px, #eff3fc 74px 87px, #e6eefb 87px 118px, #dde7fa 118px 162px, #d3dff8 162px 186px, #ccdaf8 186px 224px, #c0d8f8 224px);
}
.doc { width: 14px; height: 15px; }
.box h2 { flex: 1; margin: 0; font-size: 13px; line-height: 20px; font-weight: 700; color: #215dc6; }
.content { padding: 14px 13px 13px; }
.solver { height: 48px; display: flex; align-items: center; padding: 0 14px 0 13px; }
.solver span { width: 91px; }
.solver a { flex: 1; color: #1c3ccc; }
.filters { display: flex; align-items: center; gap: 8px; margin-bottom: 7px; }
.filters input { margin-right: 5px; }
.split { height: 20px; display: flex; background: #dfdfdf; border: 1px solid #a8a8b4; }
.split button { width: 19px; }
.split.wide { flex: 1; }
.split.wide button:first-child { flex: 1; }
.split .arrow { width: 12px; border-left: 1px solid #a8a8b4; }
.arrow::before { border-top-color: #000; }
.list { height: 192px; border: 1px solid #808490; background: #fff; padding: 1px 0; }
.list label { display: flex; align-items: center; }
.constraints label { height: 21px; padding-left: 4px; gap: 6px; }
.elements label { height: 19px; padding-left: 1px; gap: 3px; }
.elements input { margin-right: 2px; }
.elements span { margin-left: 2px; }
input[type="checkbox"] {
  appearance: none;
  flex: none;
  width: 13px;
  height: 13px;
  display: grid;
  place-items: center;
  background: #fff;
  border: 1px solid #202030;
}
input[type="checkbox"]:checked::after {
  content: "";
  width: 4px;
  height: 8px;
  margin-bottom: 2px;
  border: solid #404050;
  border-width: 0 1px 1px 0;
  transform: rotate(45deg);
}

.mdi { flex: 1; min-width: 0; display: flex; flex-direction: column; }
.view { flex: 1; min-height: 0; background: linear-gradient(#333366, #9797aa); }
.scene { width: 100%; height: 100%; }
.dim-label { font: 10px "Liberation Mono", monospace; fill: #c01c14; stroke: #40141c; stroke-width: 0.3; }
.face { font: 14px "Liberation Sans", sans-serif; fill: #18182c; }
.axis { font: bold 9px "Liberation Sans", sans-serif; fill: #10101c; }
.doc-tabs { flex: none; display: flex; align-items: flex-start; padding-left: 2px; height: 24px; }
.doc-tab { display: flex; align-items: center; gap: 4px; width: 96px; height: 22px; padding-left: 9px; border: 1px solid #d0d0d0; border-top: 0; border-right: 0; }
.doc-tab.on { width: 138px; height: 24px; padding-left: 13px; border-right: 1px solid #d0d0d0; background: #fff; }
.tabx { width: 14px; height: 14px; background: #b4b8bc; border: 1px solid #9a9ca8; border-radius: 2px; }
.tabx.red { background: #d85850; border-color: #c82018; }
.tabx svg { width: 14px; height: 14px; margin: 0 0 -2px 2px; }

.status { flex: none; height: 29px; display: flex; align-items: center; padding-top: 2px; }
.message { flex: 1; white-space: pre; }
.status button { height: 25px; border-left: 1px solid #d0d0d0; white-space: nowrap; }
.nav { width: 81px; gap: 4px; padding-left: 8px; }
.nav svg { width: 12px; height: 16px; }
.nav .tri { margin-left: 8px; }
.dims { width: 132px; gap: 1px; padding-left: 6px; }
.taskbar {
  flex: none;
  height: 7px;
  display: flex;
  justify-content: space-between;
  overflow: hidden;
  background: linear-gradient(90deg, #1e2023 55%, #2f2926 75%, #2f2926 88%, #1d2228 89%);
}
.active { width: 48px; margin-left: 287px; background: #454b50; }
.clock { margin-right: 66px; padding-top: 2px; color: #fff; }
```
